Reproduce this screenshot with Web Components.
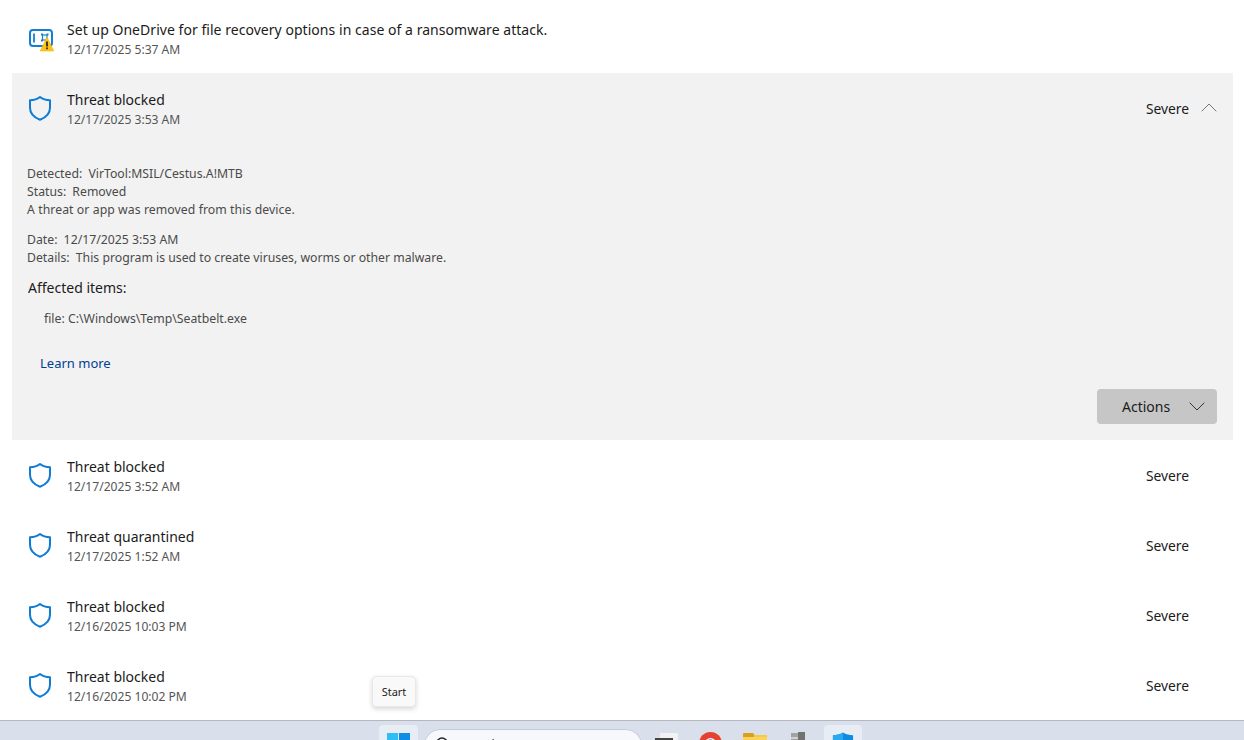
<!DOCTYPE html>
<html>
<head>
<meta charset="utf-8">
<style>
html, body { margin: 0; height: 100%; overflow: hidden; background: #fff; }
body { font-family: "Noto Sans", "Liberation Sans", sans-serif; display: flex; flex-direction: column; position: relative; }
</style>
</head>
<body>
<history-list>
  <history-item icon="onedrive" top title-text="Set up OneDrive for file recovery options in case of a ransomware attack." date="12/17/2025 5:37 AM"></history-item>
  <history-item title-text="Threat blocked" date="12/17/2025 3:53 AM" severity="Severe" expanded>
    <threat-details></threat-details>
  </history-item>
  <history-item title-text="Threat blocked" date="12/17/2025 3:52 AM" severity="Severe"></history-item>
  <history-item title-text="Threat quarantined" date="12/17/2025 1:52 AM" severity="Severe"></history-item>
  <history-item title-text="Threat blocked" date="12/16/2025 10:03 PM" severity="Severe"></history-item>
  <history-item title-text="Threat blocked" date="12/16/2025 10:02 PM" severity="Severe"></history-item>
</history-list>
<win-taskbar></win-taskbar>
<win-tooltip>Start</win-tooltip>

<script>
const FONT = '"Noto Sans", "Liberation Sans", sans-serif';

const SHIELD = `<svg width="26" height="28" viewBox="0 0 26 28" fill="none">
  <path d="M13 3 C15.8 5.2 19 6.1 23 6.2 V13.8 C23 19.4 19.4 23.4 13 25.7 C6.6 23.4 3 19.4 3 13.8 V6.2 C7 6.1 10.2 5.2 13 3 Z" stroke="#0f7bd4" stroke-width="2" stroke-linejoin="round"/>
</svg>`;

const ONEDRIVE = `<svg width="28" height="28" viewBox="0 0 28 28" fill="none">
  <rect x="4" y="6" width="22" height="16" rx="3" stroke="#1380d8" stroke-width="2"/>
  <path d="M8 9.5 V18.5" stroke="#1380d8" stroke-width="1.8"/>
  <rect x="16.5" y="11" width="4.5" height="5" stroke="#1380d8" stroke-width="1.2"/>
  <rect x="15" y="9.5" width="2" height="2" fill="#1380d8"/><rect x="20.5" y="9.5" width="2" height="2" fill="#1380d8"/>
  <rect x="15" y="15.5" width="2" height="2" fill="#1380d8"/>
  <path d="M21 13 L27.8 27 H14.2 Z" fill="#fcc419" stroke="#f5b50a" stroke-width=".6" stroke-linejoin="round"/>
  <path d="M21 17.5 V22.5" stroke="#222" stroke-width="1.7"/><rect x="20.15" y="23.5" width="1.7" height="1.7" fill="#222"/>
</svg>`;

class HistoryList extends HTMLElement {
    constructor() {
        super();
        this._root = this.attachShadow({ mode: 'open' });
        this._root.innerHTML = `
        <style>
            :host { display: flex; flex-direction: column; flex: 1; min-height: 0; padding: 0 11px 0 12px; }
        </style>
        <slot></slot>`;
    }
}

class HistoryItem extends HTMLElement {
    constructor() {
        super();
        this._root = this.attachShadow({ mode: 'open' });
    }

    connectedCallback() {
        const expanded = this.hasAttribute('expanded');
        const severity = this.getAttribute('severity');
        const chevron = expanded ? `<svg width="16" height="9" viewBox="0 0 16 9" fill="none"><path d="M.7 8.3 L8 1 L15.3 8.3" stroke="#777" stroke-width="1"/></svg>` : '';
        this._root.innerHTML = `
        <style>
            :host { display: block; font-family: ${FONT}; color: #1b1b1b; }
            :host([expanded]) { background: #f2f2f2; }
            .row { display: grid; grid-template-columns: 55px 1fr auto 44px; align-items: center; height: 70px; }
            :host([top]) .row { height: 73px; padding-top: 3px; box-sizing: border-box; }
            .icon { display: flex; justify-content: center; padding-left: 1px; width: 55px; box-sizing: border-box; }
            .text { padding-top: 2px; }
            .title { font-size: 14px; line-height: 20px; }
            :host([top]) .title { letter-spacing: .04px; }
            .date { font-size: 12.1px; line-height: 19px; color: #555; }
            .sev { font-size: 13.8px; }
            .chev { display: flex; justify-content: flex-start; align-items: center; padding-left: 12px; margin-top: -2px; }
        </style>
        <div class="row">
            <div class="icon">${this.getAttribute('icon') === 'onedrive' ? ONEDRIVE : SHIELD}</div>
            <div class="text">
                <div class="title">${this.getAttribute('title-text')}</div>
                <div class="date">${this.getAttribute('date')}</div>
            </div>
            <div class="sev">${severity || ''}</div>
            <div class="chev">${chevron}</div>
        </div>
        <slot></slot>`;
    }
}

class ThreatDetails extends HTMLElement {
    constructor() {
        super();
        this._root = this.attachShadow({ mode: 'open' });
        this._root.innerHTML = `
        <style>
            :host { display: block; height: 297px; padding: 22px 16px 0 15px; box-sizing: border-box; font-family: ${FONT}; font-size: 12.25px; line-height: 18px; color: #4a4a4a; }
            .group { margin-bottom: 12px; }
            .wide { letter-spacing: .07px; }
            b { font-weight: 400; margin-right: 3px; }
            h4 { margin: -1px 0 0; font-size: 14px; font-weight: 400; line-height: 20px; color: #1b1b1b; padding-left: 1px; }
            .file { padding: 12px 0 0 17px; }
            a { display: block; margin: 26px 0 0 13px; font-size: 13px; color: #003e92; text-decoration: none; }
            .foot { display: flex; justify-content: flex-end; margin-top: 17px; }
            button { width: 120px; height: 35px; border: 0; border-radius: 4px; background: #c6c6c6; color: #1b1b1b; font: 14px ${FONT}; display: flex; align-items: center; padding: 0 0 0 25px; gap: 19px; }
        </style>
        <div class="group">
            <div><b>Detected:</b> VirTool:MSIL/Cestus.A!MTB</div>
            <div><b>Status:</b> Removed</div>
            <div class="wide">A threat or app was removed from this device.</div>
        </div>
        <div class="group">
            <div><b>Date:</b> 12/17/2025 3:53 AM</div>
            <div><b>Details:</b> This program is used to create viruses, worms or other malware.</div>
        </div>
        <h4>Affected items:</h4>
        <div class="file">file: C:\\Windows\\Temp\\Seatbelt.exe</div>
        <a href="#">Learn more</a>
        <div class="foot">
            <button>Actions <svg width="16" height="9" viewBox="0 0 16 9" fill="none"><path d="M.7 .7 L8 8 L15.3 .7" stroke="#333" stroke-width="1"/></svg></button>
        </div>`;
    }
}

class WinTaskbar extends HTMLElement {
    constructor() {
        super();
        this._root = this.attachShadow({ mode: 'open' });
        this._root.innerHTML = `
        <style>
            :host { display: flex; flex: 0 0 20px; height: 20px; box-sizing: border-box; border-top: 1px solid #b4b8be; background: #d9dfeb; overflow: hidden; padding: 4px 0 0 379px; font-family: ${FONT}; font-size: 12px; color: #333; }
            .tile { width: 38px; height: 40px; border-radius: 4px; background: #e8ecf5; display: flex; justify-content: center; padding-top: 7px; box-sizing: border-box; flex: none; }
            .start { width: 39px; padding-top: 8px; }
            .search { flex: none; width: 218px; height: 32px; margin: 4px 0 0 6px; box-sizing: border-box; border: 1px solid #c5cbd8; border-radius: 16px; background: #f6f8fc; display: flex; gap: 10px; padding: 6px 0 0 10px; line-height: 16px; }
            .search span { padding-top: 1px; }
            .app { flex: none; display: block; }
        </style>
        <div class="tile start">
            <svg width="23" height="23" viewBox="0 0 24 24"><rect width="11.5" height="11.5" fill="#2fbdf5"/><rect x="12.5" width="11.5" height="11.5" fill="#0d8de6"/><rect y="12.5" width="11.5" height="11.5" fill="#0a84dd"/><rect x="12.5" y="12.5" width="11.5" height="11.5" fill="#0a6fc4"/></svg>
        </div>
        <div class="search">
            <svg width="16" height="16" viewBox="0 0 16 16" fill="none"><circle cx="7" cy="7" r="5" stroke="#222" stroke-width="1.6"/><path d="M11 11 L15 15" stroke="#222" stroke-width="1.6"/></svg>
            <span>Search</span>
        </div>
        <svg class="app" style="margin:8px 0 0 13px" width="26" height="20" viewBox="0 0 26 20"><rect x="5" y="0" width="18" height="14" fill="#f2f2f2"/><rect x="0" y="5" width="18" height="12" fill="#444"/></svg>
        <svg class="app" style="margin:7px 0 0 18px" width="23" height="23" viewBox="0 0 24 24"><circle cx="12" cy="12" r="12" fill="#e5432f"/><path d="M17 9 H23.5 A12 12 0 0 1 20 21 Z" fill="#f7c52b"/><circle cx="12" cy="12" r="5.8" fill="#fff"/><circle cx="12" cy="12" r="4.4" fill="#3b82f0"/></svg>
        <svg class="app" style="margin:8px 0 0 21px" width="24" height="16" viewBox="0 0 24 16"><path d="M0 1 Q0 0 1 0 H10 L11.5 2 H24 V16 H0 Z" fill="#d9a01e"/><rect x="11" y="2" width="13" height="3" fill="#f5c94a"/><rect y="4" width="24" height="12" fill="#fbd35a"/></svg>
        <svg class="app" style="margin:7px 0 0 24px" width="14" height="22" viewBox="0 0 14 22"><rect x="0" y="1" width="7" height="21" fill="#a2a2a2"/><rect x="7" y="0" width="7" height="22" fill="#727272"/><rect x="0" y="5" width="7" height="2" fill="#d0d0d0"/></svg>
        <div class="tile" style="margin-left:19px">
            <svg width="22" height="25" viewBox="0 0 24 26"><path d="M12 0 C15 2 19 3 23 3 V13 C23 19 18 23 12 26 C6 23 1 19 1 13 V3 C5 3 9 2 12 0 Z" fill="#0f8be0"/><path d="M12 0 C9 2 5 3 1 3 V13 H12 Z" fill="#2aa9f0"/></svg>
        </div>`;
    }
}

class WinTooltip extends HTMLElement {
    constructor() {
        super();
        this._root = this.attachShadow({ mode: 'open' });
        this._root.innerHTML = `
        <style>
            :host { position: absolute; left: 372px; top: 676px; width: 44px; height: 31px; box-sizing: border-box; display: flex; align-items: center; justify-content: center; background: #f9f9f9; border: 1px solid #e8e8e8; border-radius: 4px; box-shadow: 0 2px 5px rgba(0,0,0,.16); font-family: ${FONT}; font-size: 11px; color: #222; }
        </style>
        <slot></slot>`;
    }
}

customElements.define('history-list', HistoryList);
customElements.define('history-item', HistoryItem);
customElements.define('threat-details', ThreatDetails);
customElements.define('win-taskbar', WinTaskbar);
customElements.define('win-tooltip', WinTooltip);
</script>
</body>
</html>
